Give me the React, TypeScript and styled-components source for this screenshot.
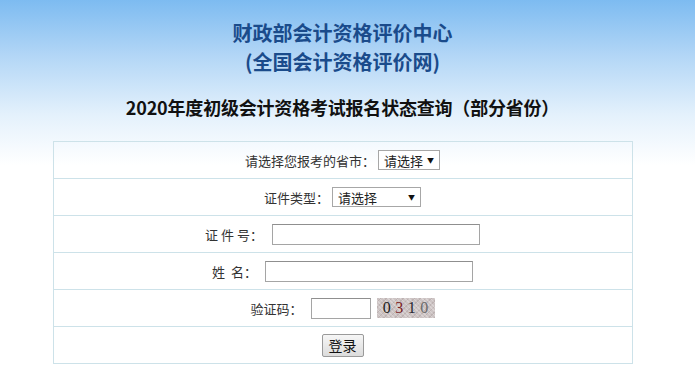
import React from "react"
import styled, { createGlobalStyle } from "styled-components"

const GlobalStyle = createGlobalStyle`
    html, body {
        margin: 0;
        padding: 0;
        background: #fff;
    }
    body {
        font-family: "Noto Sans CJK SC", "Noto Sans", sans-serif;
        color: #222;
    }
`

const Page = styled.div`
    min-height: 383px;
    background: linear-gradient(180deg, #7dbbf1 0px, #b2d6f6 55px, #e4f1fc 115px, #ffffff 165px);
`

const Inner = styled.div`
    width: 685px;
    padding-top: 18px;
    display: flex;
    flex-direction: column;
    align-items: center;
`

const Org = styled.div`
    font-size: 20px;
    font-weight: 700;
    line-height: 29px;
    color: #1a4b8b;
    text-align: center;
`

const Heading = styled.h2`
    margin: 18px 0 21px;
    font-size: 18px;
    font-weight: 700;
    line-height: 26px;
    color: #111;
    letter-spacing: -0.2px;
`

const Table = styled.table`
    width: 580px;
    border-collapse: collapse;
`

const Cell = styled.td`
    height: 36px;
    padding: 0;
    border: 1px solid #cde2e9;
    text-align: center;
    font-size: 13px;
    color: #333;
`

const Row = styled.div`
    display: inline-flex;
    align-items: center;
    gap: ${(p: { $gap?: number }) => p.$gap ?? 4}px;
`

const Label = styled.span`
    white-space: pre;
`

const FakeSelect = styled.div<{ $w: number }>`
    width: ${(p) => p.$w}px;
    height: 20px;
    box-sizing: border-box;
    border: 1px solid #a7a7a7;
    background: #fff;
    display: flex;
    align-items: center;
    justify-content: space-between;
    padding: 0 5px 0 5px;
    font-size: 13px;
    color: #222;
`

const Arrow = styled.span`
    font-size: 7px;
    color: #111;
`

const TextInput = styled.div<{ $w: number }>`
    width: ${(p) => p.$w}px;
    height: 21px;
    box-sizing: border-box;
    border: 1px solid #a5a5a5;
    border-top-color: #8f8f8f;
    background: #fff;
`

const Captcha = styled.div`
    width: 58px;
    height: 20px;
    display: flex;
    align-items: center;
    justify-content: space-around;
    padding: 0 4px;
    box-sizing: border-box;
    background-color: #cdc4c4;
    background-image:
        repeating-linear-gradient(45deg, rgba(255,255,255,0.25) 0 1px, transparent 1px 3px),
        repeating-linear-gradient(-45deg, rgba(120,100,100,0.18) 0 1px, transparent 1px 4px);
    font-family: "Liberation Serif", "DejaVu Serif", serif;
    font-size: 16px;
`

const Digit = styled.span<{ $c: string }>`
    color: ${(p) => p.$c};
`

const Button = styled.button`
    width: 42px;
    height: 23px;
    padding: 0;
    border: 1px solid #9a9a9a;
    border-radius: 2px;
    background: linear-gradient(180deg, #f6f6f6, #dcdcdc);
    font-family: "Noto Sans CJK SC", sans-serif;
    font-size: 14px;
    color: #111;
`

export default function App() {
    return (
        <Page>
            <GlobalStyle />
            <Inner>
                <Org>财政部会计资格评价中心</Org>
                <Org>(全国会计资格评价网)</Org>
                <Heading>2020年度初级会计资格考试报名状态查询（部分省份）</Heading>
                <Table>
                    <tbody>
                        <tr>
                            <Cell>
                                <Row $gap={3}>
                                    <Label>请选择您报考的省市：</Label>
                                    <FakeSelect $w={62}>请选择<Arrow>▼</Arrow></FakeSelect>
                                </Row>
                            </Cell>
                        </tr>
                        <tr>
                            <Cell>
                                <Row $gap={3}>
                                    <Label>证件类型：</Label>
                                    <FakeSelect $w={89}>请选择<Arrow>▼</Arrow></FakeSelect>
                                </Row>
                            </Cell>
                        </tr>
                        <tr>
                            <Cell>
                                <Row $gap={9}>
                                    <Label>证 件 号：</Label>
                                    <TextInput $w={208} />
                                </Row>
                            </Cell>
                        </tr>
                        <tr>
                            <Cell>
                                <Row $gap={8}>
                                    <Label>姓  名：</Label>
                                    <TextInput $w={208} />
                                </Row>
                            </Cell>
                        </tr>
                        <tr>
                            <Cell>
                                <Row $gap={8}>
                                    <Label>验证码：</Label>
                                    <Row $gap={6}>
                                        <TextInput $w={60} />
                                        <Captcha>
                                            <Digit $c="#222">0</Digit>
                                            <Digit $c="#7a1f25">3</Digit>
                                            <Digit $c="#2a2a35">1</Digit>
                                            <Digit $c="#6b6b6b">0</Digit>
                                        </Captcha>
                                    </Row>
                                </Row>
                            </Cell>
                        </tr>
                        <tr>
                            <Cell>
                                <Button>登录</Button>
                            </Cell>
                        </tr>
                    </tbody>
                </Table>
            </Inner>
        </Page>
    )
}
